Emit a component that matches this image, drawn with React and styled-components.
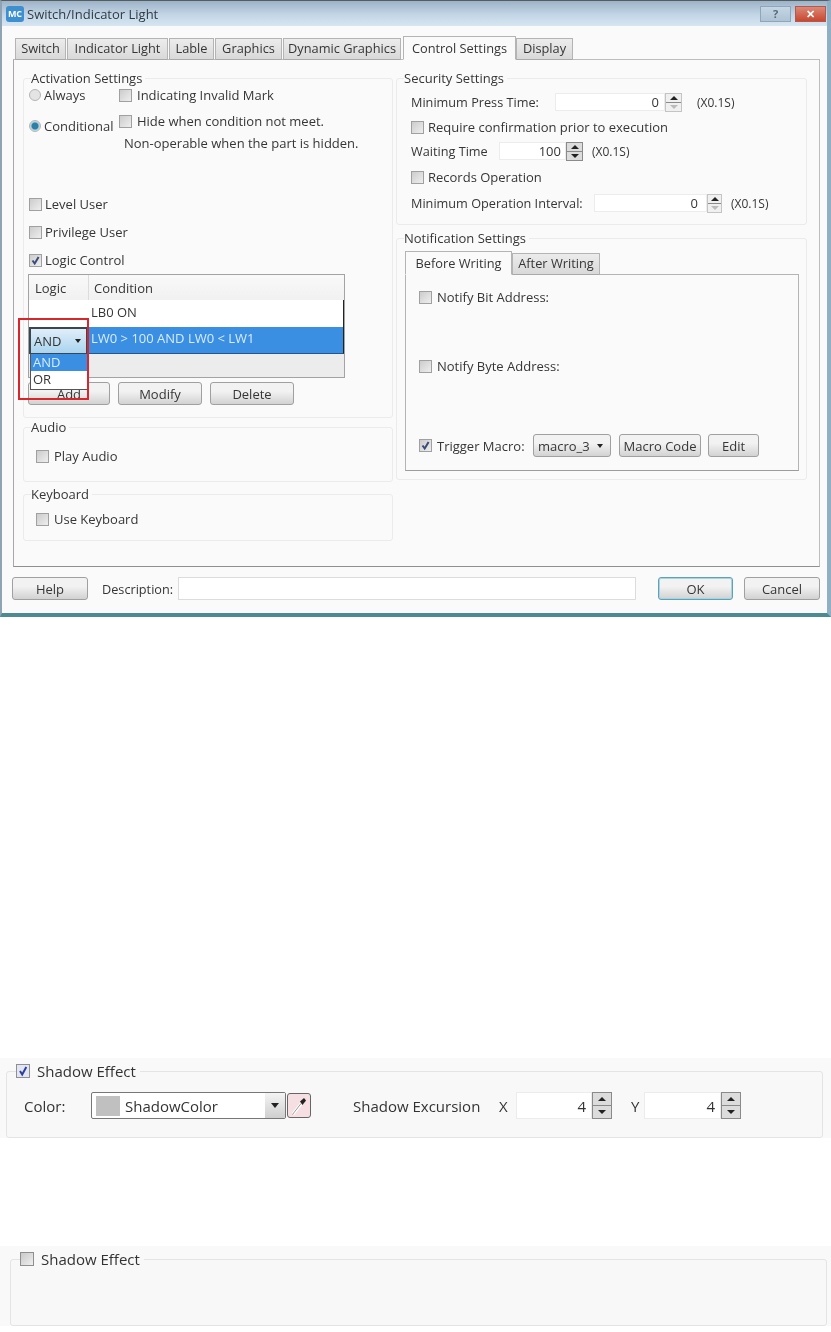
import React from "react";
import styled, { createGlobalStyle } from "styled-components";

const GlobalStyle = createGlobalStyle`
  html, body { margin: 0; padding: 0; background: #fff; }
  body { font-family: "Open Sans", "Liberation Sans", sans-serif; font-size: 13px; color: #363636; }
  * { box-sizing: border-box; }
`;

const Page = styled.div`
  width: 831px;
  height: 1332px;
  display: flex;
  flex-direction: column;
  overflow: hidden;
`;

const Window = styled.div`
  width: 831px;
  height: 617px;
  display: flex;
  flex-direction: column;
  background: #fafafa;
  border-top: 1px solid #555d63;
  border-left: 2px solid #8ea3b3;
  border-right: 4px solid #8fb0c4;
  border-bottom: 4px solid #4d8a93;
  filter: blur(0.5px);
`;

const TitleBar = styled.div`
  height: 25px;
  flex: none;
  display: flex;
  align-items: center;
  padding-left: 4px;
  background: linear-gradient(#9db3c6, #c3d6e6 55%, #d6e5f1);
`;

const AppIcon = styled.div`
  width: 18px;
  height: 16px;
  border-radius: 3px;
  background: #3d8fd0;
  color: #fff;
  font-size: 9px;
  font-weight: 700;
  line-height: 16px;
  text-align: center;
`;

const TitleText = styled.div`
  margin-left: 3px;
  font-size: 13px;
  color: #2f3a44;
`;

const CaptionButtons = styled.div`
  margin-left: auto;
  margin-right: 1px;
  display: flex;
  gap: 4px;
`;

const CaptionButton = styled.div`
  width: 31px;
  height: 16px;
  display: flex;
  align-items: center;
  justify-content: center;
  font-size: 11px;
  font-weight: 700;
  border: 1px solid ${(p) => (p.$close ? "#b5574a" : "#8ea6b9")};
  color: ${(p) => (p.$close ? "#fff" : "#56697a")};
  background: ${(p) =>
    p.$close ? "linear-gradient(#d98a78, #c9472f)" : "linear-gradient(#c5d6e4, #aec3d4)"};
`;

const Client = styled.div`
  flex: 1;
  display: flex;
  flex-direction: column;
  padding: 10px 4px 0 11px;
`;

const TabStrip = styled.div`
  height: 24px;
  flex: none;
  display: flex;
  align-items: flex-end;
  padding-left: 2px;
  position: relative;
  z-index: 1;
  margin-bottom: -1px;
`;

const Tab = styled.div`
  width: ${(p) => p.$w}px;
  height: ${(p) => (p.$active ? 24 : 22)}px;
  display: flex;
  align-items: center;
  justify-content: center;
  flex: none;
  margin-left: ${(p) => p.$ml || 0}px;
  padding-bottom: ${(p) => (p.$active ? 0 : 2)}px;
  font-size: 12.8px;
  border: 1px solid #b4b4b4;
  border-bottom: ${(p) => (p.$active ? "1px solid #fafafa" : "1px solid #a9a9a9")};
  background: ${(p) => (p.$active ? "#fafafa" : "linear-gradient(#ececec, #d9d9d9)")};
  white-space: nowrap;
`;

const TabPane = styled.div`
  height: 508px;
  width: 807px;
  flex: none;
  display: flex;
  padding: 10px 0 0 9px;
  border: 1px solid #bdbdbd;
  border-left-color: #a8a8a8;
  border-bottom-color: #8f8f8f;
  background: #fafafa;
`;

const Column = styled.div`
  width: ${(p) => p.$w}px;
  flex: none;
  margin-right: ${(p) => p.$mr || 0}px;
`;

const Group = styled.fieldset`
  margin: ${(p) => p.$mt || 0}px 0 0;
  min-width: 0;
  border: 1px solid #ebebeb;
  border-radius: 3px;
  padding: ${(p) => p.$pt || 0}px ${(p) => p.$pr || 4}px ${(p) => p.$pb || 0}px ${(p) => p.$pl || 4}px;
  display: block;
`;

const Legend = styled.legend`
  margin-left: ${(p) => p.$ml ?? 3}px;
  padding: 0 3px 0 0;
  height: 16px;
  line-height: 16px;
  white-space: nowrap;
`;

const Row = styled.div`
  height: 18px;
  display: flex;
  align-items: center;
  margin-top: ${(p) => p.$mt || 0}px;
  padding-left: ${(p) => p.$pl || 0}px;
  white-space: nowrap;
`;

const BoxMark = styled.span`
  width: 13px;
  height: 13px;
  flex: none;
  display: inline-flex;
  align-items: center;
  justify-content: center;
  border: 1px solid #a0a0a0;
  background: linear-gradient(135deg, #cccccc, #eeeeee);
  margin-right: ${(p) => p.$mr ?? 5}px;
`;

const Check = ({ checked, mr }) => (
  <BoxMark $mr={mr}>
    {checked && (
      <svg width="11" height="11" viewBox="0 0 11 11">
        <path d="M2.5 5.5 L4.7 8.5 L8.6 2" fill="none" stroke="#3b4a78" strokeWidth="2" />
      </svg>
    )}
  </BoxMark>
);

const RadioMark = styled.span`
  width: 12px;
  height: 12px;
  flex: none;
  border-radius: 50%;
  margin-right: 3px;
  border: 1px solid #b5b5b5;
  background: ${(p) =>
    p.$on ? "radial-gradient(circle, #2e7fa3 0 3px, #a9d0e0 4px, #e8eef1 6px)" : "#e4e4e4"};
`;

const OptionColumns = styled.div`
  display: flex;
`;

const RadioColumn = styled.div`
  width: 91px;
  flex: none;
  padding-left: 1px;
  display: flex;
  flex-direction: column;
  gap: 13px;
`;

const OptionColumn = styled.div`
  display: flex;
  flex-direction: column;
`;

const Table = styled.div`
  width: 317px;
  height: 104px;
  margin-top: 5px;
  display: flex;
  flex-direction: column;
  position: relative;
  border: 1px solid #a3a3a3;
  background: #ececec;
`;

const TableHeader = styled.div`
  height: 25px;
  flex: none;
  display: flex;
  align-items: center;
  background: linear-gradient(#f9f9f9, #f1f1f1);
`;

const HeaderCell = styled.div`
  width: ${(p) => p.$w}px;
  flex: none;
  height: 100%;
  display: flex;
  align-items: center;
  padding-left: ${(p) => p.$pl}px;
  border-right: ${(p) => (p.$line ? "1px solid #dcdcdc" : "none")};
`;

const TableRow = styled.div`
  height: 27px;
  flex: none;
  display: flex;
  align-items: center;
  padding: 0 0 4px 62px;
  border-right: 1px solid #222;
  color: ${(p) => (p.$selected ? "#d8ecfb" : "#363636")};
  background: ${(p) => (p.$selected ? "#3a8fe3" : "#fff")};
  border-bottom: ${(p) => (p.$selected ? "1px solid #25558c" : "none")};
`;

const Combo = styled.div`
  position: absolute;
  left: 0;
  top: 52px;
  width: 59px;
  height: 27px;
  display: flex;
  align-items: center;
  justify-content: space-between;
  padding: 0 5px 0 3px;
  border: 2px solid #3a4750;
  border-bottom-width: 1px;
  background: linear-gradient(#e0eef8, #a9d4ef);
  color: #333;
`;

const DropList = styled.div`
  position: absolute;
  left: 1px;
  top: 79px;
  width: 58px;
  height: 36px;
  z-index: 2;
  border: 1px solid #555;
  border-top: none;
  background: #fff;
`;

const DropItem = styled.div`
  height: 17px;
  line-height: 17px;
  padding-left: 2px;
  color: ${(p) => (p.$active ? "#d8ecfb" : "#363636")};
  background: ${(p) => (p.$active ? "#3a8fe3" : "#fff")};
`;

const RedFrame = styled.div`
  position: absolute;
  left: -11px;
  top: 43px;
  width: 71px;
  height: 82px;
  z-index: 3;
  border: 2px solid #d8262c;
`;

const Arrow = styled.span`
  width: 0;
  height: 0;
  flex: none;
  border-left: ${(p) => (p.$big ? 4.5 : 3.5)}px solid transparent;
  border-right: ${(p) => (p.$big ? 4.5 : 3.5)}px solid transparent;
  border-top: ${(p) => (p.$big ? 5 : 4)}px solid #222;
`;

const ButtonRow = styled.div`
  display: flex;
  gap: 8px;
  margin-top: 4px;
`;

const Button = styled.div`
  width: ${(p) => p.$w}px;
  height: 23px;
  flex: none;
  margin-left: ${(p) => p.$ml || 0}px;
  display: flex;
  align-items: center;
  justify-content: center;
  border: 1px solid ${(p) => (p.$focus ? "#5da3b8" : "#a0a0a0")};
  box-shadow: ${(p) => (p.$focus ? "inset 0 0 0 1px #a9d3df" : "none")};
  border-radius: 3px;
  background: linear-gradient(#f2f2f2 40%, #d2d2d2);
  white-space: nowrap;
`;

const Field = styled.div`
  width: ${(p) => p.$w}px;
  height: ${(p) => p.$h || 18}px;
  flex: none;
  margin-left: ${(p) => p.$ml || 0}px;
  display: flex;
  align-items: center;
  justify-content: flex-end;
  padding-right: ${(p) => p.$pr || 2}px;
  background: #fff;
  border: 1px solid #ececec;
  font-size: ${(p) => p.$fs || 13}px;
`;

const SpinBox = styled.div`
  width: ${(p) => p.$w || 17}px;
  height: ${(p) => p.$h || 19}px;
  flex: none;
  display: flex;
  flex-direction: column;
  border: 1px solid ${(p) => (p.$strong ? "#8a8a8a" : "#c4c4c4")};
  background: ${(p) => (p.$strong ? "#dcdcdc" : "#f0f0f0")};
`;

const SpinCell = styled.div`
  flex: 1;
  display: flex;
  align-items: center;
  justify-content: center;
  & + & {
    border-top: 1px solid ${(p) => (p.$strong ? "#8a8a8a" : "#d0d0d0")};
  }
`;

const SpinArrow = styled.span`
  width: 0;
  height: 0;
  border-left: 4px solid transparent;
  border-right: 4px solid transparent;
  ${(p) =>
    p.$up
      ? `border-bottom: 4px solid ${p.$dim ? "#bbb" : "#222"};`
      : `border-top: 4px solid ${p.$dim ? "#bbb" : "#222"};`}
`;

const Spin = ({ strong, dimDown, w, h }) => (
  <SpinBox $strong={strong} $w={w} $h={h}>
    <SpinCell $strong={strong}>
      <SpinArrow $up />
    </SpinCell>
    <SpinCell $strong={strong}>
      <SpinArrow $dim={dimDown} />
    </SpinCell>
  </SpinBox>
);

const Label = styled.span`
  margin-left: ${(p) => p.$ml || 0}px;
  width: ${(p) => (p.$w ? `${p.$w}px` : "auto")};
  font-size: ${(p) => (p.$fs ? `${p.$fs}px` : "inherit")};
  flex: none;
`;

const InnerTabs = styled.div`
  height: 24px;
  display: flex;
  align-items: flex-end;
  margin-bottom: -1px;
  position: relative;
  z-index: 1;
`;

const InnerPane = styled.div`
  height: 197px;
  width: 394px;
  display: flex;
  flex-direction: column;
  padding: 13px 0 0 13px;
  border: 1px solid #b4b4b4;
  border-bottom-color: #9c9c9c;
`;

const TriggerRow = styled.div`
  height: 23px;
  display: flex;
  align-items: center;
  margin-top: 59px;
  white-space: nowrap;
`;

const ComboButton = styled(Button)`
  justify-content: space-between;
  padding: 0 7px 0 4px;
`;

const Footer = styled.div`
  display: flex;
  align-items: center;
  margin-top: 10px;
`;

const Description = styled.div`
  width: 458px;
  height: 23px;
  flex: none;
  margin-left: 5px;
  background: #fff;
  border: 1px solid #dcdcdc;
`;

const ShadowPanel = styled.div`
  flex: none;
  margin-top: ${(p) => p.$mt}px;
  height: 80px;
  padding: 4px ${(p) => p.$right}px 0 ${(p) => p.$left}px;
  background: #f9f9f9;
  filter: blur(0.3px);
  font-size: 15px;
  color: #333;
`;

const ShadowGroup = styled.fieldset`
  margin: 0;
  height: 100%;
  min-width: 0;
  padding: 0;
  border: 1px solid #e4e4e4;
  border-radius: 3px;
  background: #f8f8f8;
`;

const ShadowLegend = styled.legend`
  margin-left: 9px;
  padding: 0 4px 0 0;
  height: 18px;
  line-height: 18px;
  display: flex;
  align-items: center;
`;

const ShadowCheck = styled.span`
  width: 14px;
  height: 14px;
  flex: none;
  display: inline-flex;
  align-items: center;
  justify-content: center;
  margin-right: 7px;
  border: 1px solid #8f8f8f;
  background: ${(p) => (p.$on ? "#e2e6f4" : "linear-gradient(135deg, #c9c9c9, #efefef)")};
`;

const ShadowRow = styled.div`
  display: flex;
  align-items: center;
  margin-top: 12px;
  padding-left: 17px;
`;

const ColorCombo = styled.div`
  width: 195px;
  height: 27px;
  flex: none;
  margin-left: 24px;
  display: flex;
  align-items: center;
  padding-left: 4px;
  background: #fff;
  border: 1px solid #777;
  border-radius: 2px;
`;

const Swatch = styled.span`
  width: 24px;
  height: 20px;
  flex: none;
  margin-right: 5px;
  background: #c0c0c0;
`;

const ComboDrop = styled.span`
  margin-left: auto;
  width: 20px;
  height: 25px;
  display: flex;
  align-items: center;
  justify-content: center;
  background: linear-gradient(#f4f4f4, #cfcfcf);
`;

const PickerButton = styled.div`
  width: 24px;
  height: 25px;
  flex: none;
  margin-left: 1px;
  display: flex;
  align-items: center;
  justify-content: center;
  border: 1px solid #666;
  border-radius: 3px;
  background: #f6dfe2;
`;

const Tabs = [
  ["Switch", 51, 0],
  ["Indicator Light", 101, 1],
  ["Lable", 45, 1],
  ["Graphics", 67, 1],
  ["Dynamic Graphics", 118, 1],
];

export default function App() {
  return (
    <Page>
      <GlobalStyle />
      <Window>
        <TitleBar>
          <AppIcon>MC</AppIcon>
          <TitleText>Switch/Indicator Light</TitleText>
          <CaptionButtons>
            <CaptionButton>?</CaptionButton>
            <CaptionButton $close>✕</CaptionButton>
          </CaptionButtons>
        </TitleBar>
        <Client>
          <TabStrip>
            {Tabs.map(([name, w, ml]) => (
              <Tab key={name} $w={w} $ml={ml}>
                {name}
              </Tab>
            ))}
            <Tab $w={113} $ml={2} $active>
              Control Settings
            </Tab>
            <Tab $w={57}>Display</Tab>
          </TabStrip>
          <TabPane>
            <Column $w={370} $mr={3}>
              <Group $pb={12}>
                <Legend>Activation Settings</Legend>
                <OptionColumns>
                  <RadioColumn>
                    <Row>
                      <RadioMark />
                      Always
                    </Row>
                    <Row>
                      <RadioMark $on />
                      Conditional
                    </Row>
                  </RadioColumn>
                  <OptionColumn>
                    <Row>
                      <Check />
                      Indicating Invalid Mark
                    </Row>
                    <Row $mt={8}>
                      <Check />
                      Hide when condition not meet.
                    </Row>
                    <Row $mt={4} $pl={5}>
                      Non-operable when the part is hidden.
                    </Row>
                  </OptionColumn>
                </OptionColumns>
                <Row $mt={43} $pl={1}>
                  <Check mr={3} />
                  Level User
                </Row>
                <Row $mt={10} $pl={1}>
                  <Check mr={3} />
                  Privilege User
                </Row>
                <Row $mt={10} $pl={1}>
                  <Check checked mr={3} />
                  Logic Control
                </Row>
                <Table>
                  <TableHeader>
                    <HeaderCell $w={60} $pl={6} $line>
                      Logic
                    </HeaderCell>
                    <HeaderCell $w={200} $pl={5}>
                      Condition
                    </HeaderCell>
                  </TableHeader>
                  <TableRow>LB0 ON</TableRow>
                  <TableRow $selected>LW0 &gt; 100 AND LW0 &lt; LW1</TableRow>
                  <Combo>
                    AND
                    <Arrow />
                  </Combo>
                  <DropList>
                    <DropItem $active>AND</DropItem>
                    <DropItem>OR</DropItem>
                  </DropList>
                  <RedFrame />
                </Table>
                <ButtonRow>
                  <Button $w={82}>Add</Button>
                  <Button $w={84}>Modify</Button>
                  <Button $w={84}>Delete</Button>
                </ButtonRow>
              </Group>
              <Group $mt={1} $pt={12} $pb={16} $pl={12}>
                <Legend $ml={-5}>Audio</Legend>
                <Row>
                  <Check />
                  Play Audio
                </Row>
              </Group>
              <Group $mt={4} $pt={8} $pb={12} $pl={12}>
                <Legend $ml={-5}>Keyboard</Legend>
                <Row>
                  <Check />
                  Use Keyboard
                </Row>
              </Group>
            </Column>
            <Column $w={411}>
              <Group $pt={7} $pb={12} $pl={14}>
                <Legend $ml={-7}>Security Settings</Legend>
                <Row>
                  <Label $w={144} $fs={12.7}>Minimum Press Time:</Label>
                  <Field $w={110} $pr={5}>0</Field>
                  <Spin dimDown />
                  <Label $ml={15} $fs={12}>(X0.1S)</Label>
                </Row>
                <Row $mt={7}>
                  <Check mr={4} />
                  Require confirmation prior to execution
                </Row>
                <Row $mt={6}>
                  <Label $w={88} $fs={12.7}>Waiting Time</Label>
                  <Field $w={67} $pr={4}>100</Field>
                  <Spin strong />
                  <Label $ml={9} $fs={12}>(X0.1S)</Label>
                </Row>
                <Row $mt={8}>
                  <Check mr={4} />
                  Records Operation
                </Row>
                <Row $mt={8}>
                  <Label $w={183} $fs={12.7}>Minimum Operation Interval:</Label>
                  <Field $w={113} $pr={8}>0</Field>
                  <Spin dimDown w={15} />
                  <Label $ml={9} $fs={12}>(X0.1S)</Label>
                </Row>
              </Group>
              <Group $mt={5} $pt={5} $pb={8} $pl={8}>
                <Legend $ml={-1}>Notification Settings</Legend>
                <InnerTabs>
                  <Tab $w={107} $active>
                    Before Writing
                  </Tab>
                  <Tab $w={88}>After Writing</Tab>
                </InnerTabs>
                <InnerPane>
                  <Row>
                    <Check />
                    Notify Bit Address:
                  </Row>
                  <Row $mt={51}>
                    <Check />
                    Notify Byte Address:
                  </Row>
                  <TriggerRow>
                    <Check checked />
                    <Label $w={90}>Trigger Macro:</Label>
                    <ComboButton $w={78} $ml={6}>
                      macro_3
                      <Arrow />
                    </ComboButton>
                    <Button $w={82} $ml={8}>
                      Macro Code
                    </Button>
                    <Button $w={51} $ml={7}>
                      Edit
                    </Button>
                  </TriggerRow>
                </InnerPane>
              </Group>
            </Column>
          </TabPane>
          <Footer>
            <Button $w={76} $ml={-1}>Help</Button>
            <Label $ml={14} $w={71} $fs={12.7}>Description:</Label>
            <Description />
            <Button $w={75} $ml={22} $focus>OK</Button>
            <Button $w={76} $ml={11}>Cancel</Button>
          </Footer>
        </Client>
      </Window>

      <ShadowPanel $mt={441} $left={6} $right={8}>
        <ShadowGroup>
          <ShadowLegend>
            <ShadowCheck $on>
              <svg width="12" height="12" viewBox="0 0 12 12">
                <path d="M3 6 L5.2 9.5 L9.3 2" fill="none" stroke="#2f3f9a" strokeWidth="2" />
              </svg>
            </ShadowCheck>
            Shadow Effect
          </ShadowLegend>
          <ShadowRow>
            <Label $w={43}>Color:</Label>
            <ColorCombo>
              <Swatch />
              ShadowColor
              <ComboDrop>
                <Arrow $big />
              </ComboDrop>
            </ColorCombo>
            <PickerButton>
              <svg width="18" height="20" viewBox="0 0 18 20">
                <path d="M3 18 L11 8" stroke="#fff" strokeWidth="3" />
                <path d="M2.5 18.5 L11 7.5" stroke="#9a9a9a" strokeWidth="1" fill="none" />
                <path d="M10 5.5 L14 2 L16 4.5 L12.5 9 Z" fill="#222" />
              </svg>
            </PickerButton>
            <Label $ml={42} $w={146}>Shadow Excursion</Label>
            <Label $w={17}>X</Label>
            <Field $w={76} $h={27} $pr={5} $fs={15}>4</Field>
            <Spin strong w={20} h={27} />
            <Label $ml={19} $w={13}>Y</Label>
            <Field $w={77} $h={27} $pr={5} $fs={15}>4</Field>
            <Spin strong w={20} h={27} />
          </ShadowRow>
        </ShadowGroup>
      </ShadowPanel>

      <ShadowPanel $mt={108} $left={10} $right={4}>
        <ShadowGroup>
          <ShadowLegend>
            <ShadowCheck />
            Shadow Effect
          </ShadowLegend>
        </ShadowGroup>
      </ShadowPanel>
    </Page>
  );
}
